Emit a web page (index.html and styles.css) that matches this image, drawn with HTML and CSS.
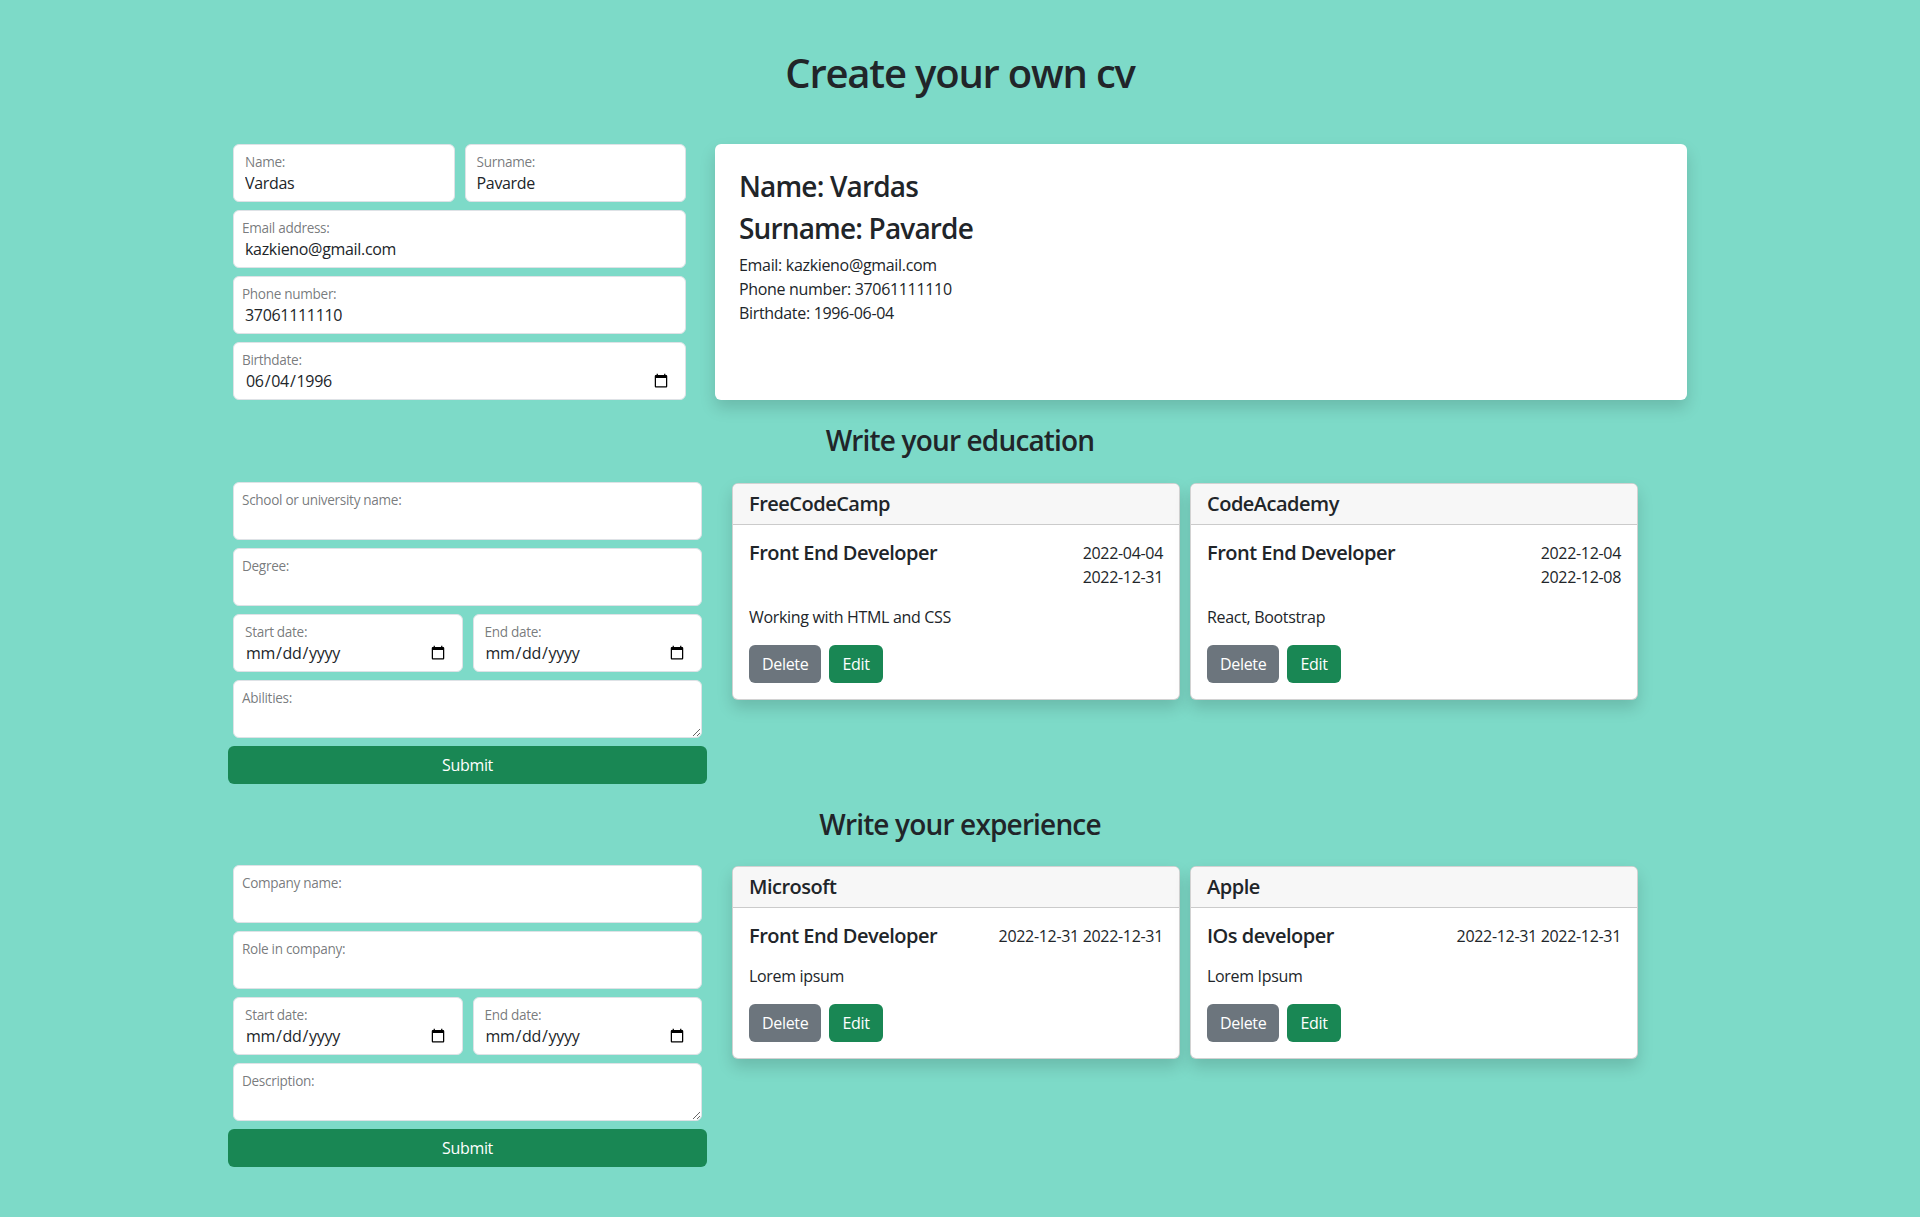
FILE: index.html
```html
<!DOCTYPE html>
<html lang="en">
<head>
<meta charset="utf-8">
<title>Create your own cv</title>
<link rel="stylesheet" href="styles.css">
</head>
<body>
<div class="page">
  <h1 class="title">Create your own cv</h1>

  <section class="top-row">
    <form class="info-form">
      <div class="pair">
        <div class="field"><label class="lbl-in">Name:</label><input type="text" value="Vardas"></div>
        <div class="field"><label class="lbl-in">Surname:</label><input type="text" value="Pavarde"></div>
      </div>
      <div class="field"><label>Email address:</label><input type="email" value="kazkieno@gmail.com"></div>
      <div class="field"><label>Phone number:</label><input type="text" value="37061111110"></div>
      <div class="field"><label>Birthdate:</label><input type="date" value="1996-06-04"></div>
    </form>
    <div class="preview">
      <h3 class="preview-title">Name: Vardas</h3>
      <h3 class="preview-title">Surname: Pavarde</h3>
      <p class="preview-line">Email: kazkieno@gmail.com</p>
      <p class="preview-line">Phone number: 37061111110</p>
      <p class="preview-line">Birthdate: 1996-06-04</p>
    </div>
  </section>

  <h3 class="section-title">Write your education</h3>
  <section class="entry-row">
    <form class="entry-form">
      <div class="field"><label>School or university name:</label><input type="text"></div>
      <div class="field"><label>Degree:</label><input type="text"></div>
      <div class="pair">
        <div class="field"><label class="lbl-in">Start date:</label><input type="date"></div>
        <div class="field"><label class="lbl-in">End date:</label><input type="date"></div>
      </div>
      <div class="field area"><label>Abilities:</label><textarea></textarea></div>
      <button type="button" class="btn btn-submit">Submit</button>
    </form>
    <div class="card">
      <div class="card-header">FreeCodeCamp</div>
      <div class="card-body">
        <div class="card-top">
          <h5 class="card-title">Front End Developer</h5>
          <div class="card-dates"><div>2022-04-04</div><div>2022-12-31</div></div>
        </div>
        <p class="card-text">Working with HTML and CSS</p>
        <div class="actions"><button type="button" class="btn btn-delete">Delete</button><button type="button" class="btn btn-edit">Edit</button></div>
      </div>
    </div>
    <div class="card">
      <div class="card-header">CodeAcademy</div>
      <div class="card-body">
        <div class="card-top">
          <h5 class="card-title">Front End Developer</h5>
          <div class="card-dates"><div>2022-12-04</div><div>2022-12-08</div></div>
        </div>
        <p class="card-text">React, Bootstrap</p>
        <div class="actions"><button type="button" class="btn btn-delete">Delete</button><button type="button" class="btn btn-edit">Edit</button></div>
      </div>
    </div>
  </section>

  <h3 class="section-title">Write your experience</h3>
  <section class="entry-row">
    <form class="entry-form">
      <div class="field"><label>Company name:</label><input type="text"></div>
      <div class="field"><label>Role in company:</label><input type="text"></div>
      <div class="pair">
        <div class="field"><label class="lbl-in">Start date:</label><input type="date"></div>
        <div class="field"><label class="lbl-in">End date:</label><input type="date"></div>
      </div>
      <div class="field area"><label>Description:</label><textarea></textarea></div>
      <button type="button" class="btn btn-submit">Submit</button>
    </form>
    <div class="card">
      <div class="card-header">Microsoft</div>
      <div class="card-body">
        <div class="card-top">
          <h5 class="card-title">Front End Developer</h5>
          <div class="card-dates">2022-12-31 2022-12-31</div>
        </div>
        <p class="card-text">Lorem ipsum</p>
        <div class="actions"><button type="button" class="btn btn-delete">Delete</button><button type="button" class="btn btn-edit">Edit</button></div>
      </div>
    </div>
    <div class="card">
      <div class="card-header">Apple</div>
      <div class="card-body">
        <div class="card-top">
          <h5 class="card-title">IOs developer</h5>
          <div class="card-dates">2022-12-31 2022-12-31</div>
        </div>
        <p class="card-text">Lorem Ipsum</p>
        <div class="actions"><button type="button" class="btn btn-delete">Delete</button><button type="button" class="btn btn-edit">Edit</button></div>
      </div>
    </div>
  </section>
</div>
</body>
</html>
```

FILE: styles.css
```css
html, body {
  margin: 0;
  background: #7ddac8;
}

body {
  font-family: "Open Sans", "Noto Sans", sans-serif;
  font-size: 16px;
  line-height: 1.5;
  color: #212529;
  letter-spacing: -0.02em;
}

.page {
  width: 1464px;
  margin: 0 auto;
  padding-bottom: 51px;
}

.title {
  margin: 49px 0 0;
  font-size: 40px;
  line-height: 48px;
  font-weight: 600;
  text-align: center;
  letter-spacing: -0.03em;
}

.top-row {
  display: flex;
  margin-top: 47px;
  padding-left: 5px;
  gap: 29px;
}

.info-form {
  width: 453px;
  flex: none;
  display: flex;
  flex-direction: column;
  gap: 8px;
  margin: 0;
}

.pair {
  display: flex;
  gap: 10px;
}

.pair .field {
  flex: 1;
  min-width: 0;
}

.field {
  box-sizing: border-box;
  height: 58px;
  background: #fff;
  border: 1px solid #dee2e6;
  border-radius: 6px;
  padding: 8px 12px 0 11px;
  display: flex;
  flex-direction: column;
}

.field label {
  font-size: 13.6px;
  line-height: 18px;
  color: rgba(33, 37, 41, 0.62);
  margin-left: -3px;
  white-space: nowrap;
}

.field label.lbl-in {
  margin-left: 0;
}

.field input {
  display: block;
  width: 100%;
  box-sizing: border-box;
  height: 24px;
  margin: 0;
  padding: 0;
  border: 0;
  outline: none;
  background: transparent;
  font: inherit;
  font-size: 16px;
  line-height: 24px;
  letter-spacing: inherit;
  color: #212529;
}

.field input[type="date"]::-webkit-calendar-picker-indicator {
  margin-right: 2px;
}

.field.area {
  padding: 8px 0 0;
}

.field.area label {
  margin-left: 8px;
}

.field textarea {
  flex: 1;
  display: block;
  margin: 0;
  padding: 0 12px;
  border: 0;
  outline: none;
  background: transparent;
  border-radius: 0 0 5px 5px;
  font: inherit;
  resize: vertical;
}

.preview {
  width: 972px;
  flex: none;
  box-sizing: border-box;
  background: #fff;
  border-radius: 6px;
  box-shadow: 0 8px 16px rgba(0, 0, 0, 0.15);
  padding: 26px 24px 22px;
}

.preview-title {
  margin: 0 0 8px;
  font-size: 28px;
  line-height: 33.6px;
  font-weight: 600;
  letter-spacing: -0.03em;
}

.preview-line {
  margin: 0;
}

.section-title {
  margin: 24px 0;
  font-size: 28px;
  line-height: 33.6px;
  font-weight: 600;
  text-align: center;
  letter-spacing: -0.03em;
}

.entry-row {
  display: flex;
  align-items: flex-start;
  gap: 10px;
}

.entry-form {
  width: 479px;
  flex: none;
  display: flex;
  flex-direction: column;
  gap: 8px;
  margin: 0 15px 0 0;
}

.entry-form .field {
  margin: 0 5px;
}

.entry-form .pair {
  margin: 0 5px;
}

.entry-form .pair .field {
  margin: 0;
}

.card {
  width: 448px;
  flex: none;
  box-sizing: border-box;
  margin-top: 1px;
  background: #fff;
  border: 1px solid rgba(0, 0, 0, 0.175);
  border-radius: 6px;
  overflow: hidden;
  box-shadow: 0 8px 16px rgba(0, 0, 0, 0.15);
}

.card-header {
  background: #f7f7f7;
  padding: 8px 16px;
  border-bottom: 1px solid rgba(0, 0, 0, 0.175);
  font-size: 20px;
  line-height: 24px;
  font-weight: 600;
  letter-spacing: -0.025em;
}

.card-body {
  padding: 16px;
}

.card-top {
  display: flex;
  justify-content: space-between;
  align-items: flex-start;
}

.card-title {
  margin: 0;
  font-size: 20px;
  line-height: 24px;
  font-weight: 600;
  letter-spacing: -0.025em;
}

.card-dates {
  text-align: right;
}

.card-text {
  margin: 16px 0;
}

.actions {
  display: flex;
  gap: 8px;
}

.btn {
  box-sizing: border-box;
  border: 1px solid transparent;
  border-radius: 6px;
  padding: 6px 12px;
  font: inherit;
  font-size: 16px;
  line-height: 24px;
  letter-spacing: inherit;
  color: #fff;
  cursor: pointer;
}

.btn-delete {
  background: #6c757d;
}

.btn-edit {
  background: #198754;
}

.btn-submit {
  width: 100%;
  background: #198754;
  text-align: center;
}
```
